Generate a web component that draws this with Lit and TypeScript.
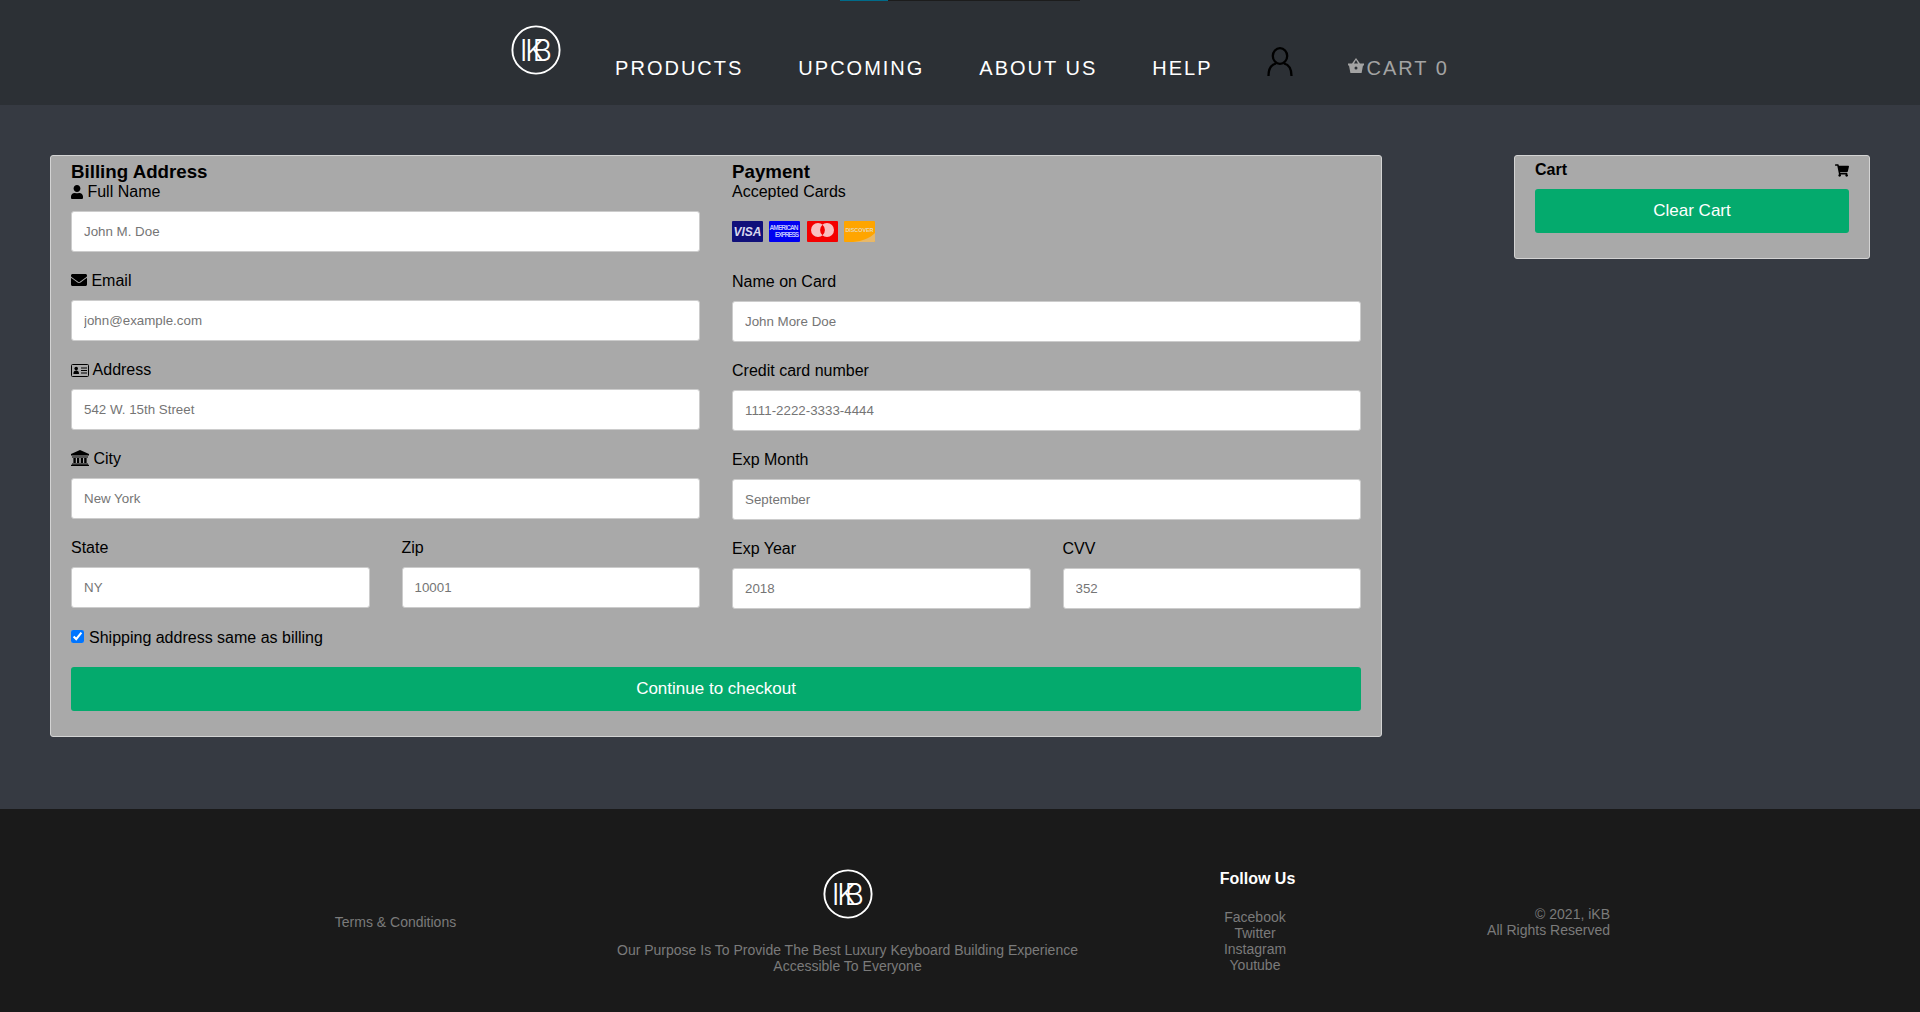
import { LitElement, html, css, svg } from "lit";
import { customElement } from "lit/decorators.js";

const logo = (size: number) => html`<svg class="logo" width=${size} height=${size} viewBox="0 0 50 50" aria-label="iKB">
  <circle cx="25" cy="25" r="23.6" fill="none" stroke="#fff" stroke-width="1.9"></circle>
  <text x="8.800 14 21.500" y="35.800" fill="#fff" font-family="Inter, 'Liberation Sans', sans-serif" font-weight="300" font-size="30">IKB</text>
</svg>`;

const ic = {
  user: svg`<path d="M224 256c70.7 0 128-57.3 128-128S294.7 0 224 0 96 57.3 96 128s57.3 128 128 128zm89.6 32h-16.7c-22.2 10.2-46.9 16-72.9 16s-50.6-5.8-72.9-16h-16.7C60.2 288 0 348.2 0 422.4V464c0 26.5 21.5 48 48 48h352c26.5 0 48-21.5 48-48v-41.6c0-74.2-60.2-134.4-134.4-134.4z"/>`,
  mail: svg`<path d="M502.3 190.8c3.9-3.1 9.7-.2 9.7 4.7V400c0 26.5-21.5 48-48 48H48c-26.5 0-48-21.5-48-48V195.6c0-5 5.7-7.8 9.7-4.7 22.4 17.4 52.1 39.5 154.1 113.6 21.1 15.4 56.7 47.8 92.2 47.6 35.7.3 72-32.8 92.3-47.6 102-74.1 131.6-96.3 154-113.7zM256 320c23.2.4 56.6-29.2 73.4-41.4 132.7-96.3 142.8-104.7 173.4-128.7 5.8-4.5 9.2-11.5 9.2-18.9v-19c0-26.5-21.5-48-48-48H48C21.5 64 0 85.5 0 112v19c0 7.4 3.4 14.3 9.2 18.9 30.6 23.9 40.7 32.4 173.4 128.7 16.8 12.2 50.2 41.8 73.4 41.4z"/>`,
  cart: svg`<path d="M528.12 301.319l47.273-208C578.806 78.301 567.391 64 551.99 64H159.208l-9.166-44.81C147.758 8.021 137.93 0 126.529 0H24C10.745 0 0 10.745 0 24v16c0 13.255 10.745 24 24 24h69.883l70.248 343.435C147.325 417.1 136 435.222 136 456c0 30.928 25.072 56 56 56s56-25.072 56-56c0-15.674-6.447-29.835-16.824-40h209.647C430.447 426.165 424 440.326 424 456c0 30.928 25.072 56 56 56s56-25.072 56-56c0-22.172-12.888-41.332-31.579-50.405l5.517-24.276c3.413-15.018-8.002-29.319-23.403-29.319H218.117l-6.545-32h293.145c11.206 0 20.92-7.754 23.403-18.681z"/>`,
};

const userIcon = html`<svg class="fi" width="12" height="14" viewBox="0 0 448 512" preserveAspectRatio="none">${ic.user}</svg>`;
const mailIcon = html`<svg class="fi" width="16" height="16" viewBox="0 0 512 512" preserveAspectRatio="none">${ic.mail}</svg>`;
const cardIcon = html`<svg class="fi" width="18" height="13" viewBox="0 0 18 13">
  <rect x=".5" y=".5" width="17" height="12" rx="1" fill="none" stroke="#000"></rect>
  <circle cx="5.2" cy="4.6" r="1.8"></circle><path d="M2.400 10c0-2.400 1-3.400 2.800-3.400S8 7.600 8 10z"></path>
  <path d="M10 4h6M10 6.500h6M10 9h6" stroke="#000" fill="none"></path></svg>`;
const bankIcon = html`<svg class="fi" width="18" height="16" viewBox="0 0 18 16">
  <path d="M9 0 18 4v1.500H0V4zM1 6.400h16v1H1zM2.400 8h2.400v5H2.400zM6 8h2.200v5H6zM9.800 8H12v5H9.800zM13.200 8h2.400v5h-2.400zM1 13.400h16v1H1zM0 14.800h18V16H0z"></path></svg>`;

@customElement("app-root")
export class AppRoot extends LitElement {
  static styles = css`
    :host { display: block; font-family: "Liberation Sans", Arial, sans-serif; font-size: 16px; background: #363a42; color: #000; }
    * { box-sizing: border-box; }
    .top { height: 105px; background: #2c3035; position: relative; display: flex; justify-content: center; align-items: flex-end; padding: 0 0 25px 40px; gap: 55px; }
    .strip { position: absolute; top: 0; left: 840px; width: 240px; height: 1px; background: #1c1c1c; }
    .strip::before { content: ""; display: block; width: 48px; height: 1px; background: #006b8a; }
    .brand { margin: 0 -1px 5px 0; line-height: 0; }
    .link { color: #fff; font-size: 20px; letter-spacing: 2px; line-height: 23px; }
    .person { line-height: 0; margin: 0 0 4px 0; }
    .cartlink { color: #a3a3a3; display: flex; align-items: center; gap: 2px; }
    .cartlink svg { margin-top: -6px; }
    main { display: flex; justify-content: space-between; align-items: flex-start; padding: 50px 50px 72px; }
    .card { background: #a9a9a9; border: 1px solid #d3d3d3; border-radius: 3px; padding: 5px 20px 15px; }
    .checkout { width: 1332px; }
    .cols { display: grid; grid-template-columns: 629px 629px; column-gap: 32px; }
    h3 { margin: 0; font-size: 18.72px; line-height: 22px; }
    label { display: block; margin-bottom: 10px; line-height: 18px; height: 18px; white-space: nowrap; }
    .fi { vertical-align: -2px; }
    input.text { display: block; width: 100%; height: 41px; margin-bottom: 20px; padding: 12px; border: 1px solid #ccc; border-radius: 3px; font: 13.33px "Liberation Sans", Arial, sans-serif; background: #fff; }
    input.text::placeholder { color: #757575; opacity: 1; }
    .two { display: grid; grid-template-columns: 298.5px 298.5px; column-gap: 32px; }
    .cards { display: flex; gap: 6.3px; padding-top: 10px; margin-bottom: 20px; height: 42px; line-height: 0; }
    .ship { display: flex; align-items: center; margin: 0 0 20px; height: 18px; }
    .ship input { margin: 0 5px 3px 0; width: 13px; height: 13px; }
    .btn { display: block; width: 100%; height: 44px; border: 0; border-radius: 3px; background: #04aa6d; color: #fff; font: 17px "Liberation Sans", Arial, sans-serif; margin: 0 0 10px; }
    .side { width: 356px; }
    .side-head { display: flex; justify-content: space-between; align-items: center; font-weight: 700; line-height: 18px; margin-bottom: 10px; height: 18px; }
    footer { height: 204px; background: #1a1a1a; color: #7b7b7b; font-size: 14px; line-height: 16px; display: grid; grid-template-columns: 443px 461px 354px 178px; padding-left: 174px; text-align: center; }
    .terms { padding-top: 105px; }
    .mid { padding-top: 60px; }
    .mid .logo { display: block; margin: 0 auto 23px; }
    .follow { padding-top: 61px; }
    .follow h4 { margin: 0 0 21px; color: #fff; font-size: 16px; line-height: 18px; padding-left: 5px; }
    .copy { padding-top: 97px; text-align: right; }
  `;

  field(lbl: unknown, ph: string) {
    return html`<div><label>${lbl}</label><input class="text" placeholder=${ph} /></div>`;
  }

  render() {
    return html`
      <header class="top">
        <div class="strip"></div>
        <div class="brand">${logo(50)}</div>
        <span class="link">PRODUCTS</span>
        <span class="link">UPCOMING</span>
        <span class="link">ABOUT US</span>
        <span class="link">HELP</span>
        <span class="person"><svg width="26" height="29" viewBox="0 0 26 29" fill="none" stroke="#000" stroke-width="2.300"><ellipse cx="13" cy="9" rx="7.200" ry="7.800"></ellipse><path d="M1.500 29c0-7 3-11.500 7.500-12.500M24.500 29c0-7-3-11.500-7.500-12.500"></path></svg></span>
        <span class="link cartlink"><svg width="16" height="15" viewBox="0 0 16 15" fill="#a3a3a3"><path d="M8 0 4 5.500H0v2h1L2.400 15h11.200L15 7.500h1v-2h-4zM8 1.900 10 5.500H6z"></path><circle cx="8" cy="10" r="1.500" fill="#2c3035"></circle></svg>CART 0</span>
      </header>
      <main>
        <section class="card checkout">
          <div class="cols">
            <div>
              <h3>Billing Address</h3>
              ${this.field(html`${userIcon} Full Name`, "John M. Doe")}
              ${this.field(html`${mailIcon} Email`, "john@example.com")}
              ${this.field(html`${cardIcon} Address`, "542 W. 15th Street")}
              ${this.field(html`${bankIcon} City`, "New York")}
              <div class="two">
                ${this.field("State", "NY")}
                ${this.field("Zip", "10001")}
              </div>
            </div>
            <div class="pay">
              <h3>Payment</h3>
              <label>Accepted Cards</label>
              <div class="cards">
                <svg width="31" height="21" viewBox="0 0 31 21"><rect width="31" height="21" rx="1" fill="#10107a"></rect><text x="15.500" y="15" text-anchor="middle" fill="#d8d8ee" font-family="Liberation Sans" font-size="12" font-weight="700" font-style="italic">VISA</text></svg>
                <svg width="31" height="21" viewBox="0 0 31 21"><rect width="31" height="21" rx="1" fill="#0000f0"></rect><text x="15" y="9" text-anchor="middle" fill="#bfc4ff" font-family="Liberation Sans" font-size="6.500" font-weight="700" textLength="29">AMERICAN</text><text x="18" y="16" text-anchor="middle" fill="#bfc4ff" font-family="Liberation Sans" font-size="6.500" font-weight="700" textLength="24">EXPRESS</text></svg>
                <svg width="31" height="21" viewBox="0 0 31 21"><rect width="31" height="21" rx="1" fill="#f40000"></rect><circle cx="11" cy="9" r="7" fill="#f8c0c0"></circle><circle cx="20" cy="9" r="7" fill="#f8c0c0"></circle><path d="M15.500 3.700a7 7 0 0 1 0 10.600a7 7 0 0 1 0-10.600z" fill="#f40000"></path></svg>
                <svg width="31" height="21" viewBox="0 0 31 21"><rect width="31" height="21" rx="1" fill="#ffa500"></rect><path d="M31 12V20a1 1 0 0 1-1 1H9C19 20 26 17 31 12z" fill="#e8b868"></path><text x="15.500" y="11" text-anchor="middle" fill="#e8d8b8" font-family="Liberation Sans" font-size="5.500" font-weight="700" textLength="28">DISCOVER</text></svg>
              </div>
              ${this.field("Name on Card", "John More Doe")}
              ${this.field("Credit card number", "1111-2222-3333-4444")}
              ${this.field("Exp Month", "September")}
              <div class="two">
                ${this.field("Exp Year", "2018")}
                ${this.field("CVV", "352")}
              </div>
            </div>
          </div>
          <label class="ship"><input type="checkbox" checked />Shipping address same as billing</label>
          <button class="btn">Continue to checkout</button>
        </section>
        <aside class="card side">
          <div class="side-head"><span>Cart</span><svg width="14" height="13" viewBox="0 0 576 512">${ic.cart}</svg></div>
          <button class="btn">Clear Cart</button>
        </aside>
      </main>
      <footer>
        <div class="terms">Terms &amp; Conditions</div>
        <div class="mid">${logo(50)}<div>Our Purpose Is To Provide The Best Luxury Keyboard Building Experience<br />Accessible To Everyone</div></div>
        <div class="follow"><h4>Follow Us</h4>Facebook<br />Twitter<br />Instagram<br />Youtube</div>
        <div class="copy">© 2021, iKB<br />All Rights Reserved</div>
      </footer>
    `;
  }
}
